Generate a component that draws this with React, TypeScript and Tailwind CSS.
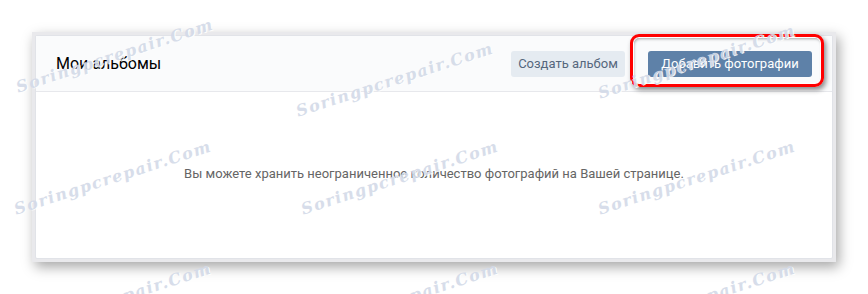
const marks = [
  { x: 115, y: 56 },
  { x: 395, y: 80 },
  { x: 697, y: 62 },
  { x: 113, y: 178 },
  { x: 400, y: 178 },
  { x: 697, y: 178 },
  { x: 113, y: 300 },
  { x: 400, y: 300 },
  { x: 697, y: 300 },
];

function Watermark({ x, y }: { x: number; y: number }) {
  return (
    <div
      className="pointer-events-none absolute -translate-x-1/2 -translate-y-1/2 -rotate-[18deg] whitespace-nowrap text-[16px] font-bold italic tracking-[1.5px] text-[#d3dae8] opacity-90 [font-family:'DejaVu_Serif',serif] [text-shadow:1px_1px_0_#fff]"
      style={{ left: x, top: y }}
    >
      Soringpcrepair.Com
    </div>
  );
}

export default function App() {
  return (
    <div className="relative h-[294px] w-[868px] overflow-hidden bg-white pt-8 pl-8 [font-family:Roboto,'Open_Sans',sans-serif]">
      <div className="h-[230px] w-[804px] bg-[#e9e9ec] p-[3px] shadow-[3px_5px_12px_rgba(0,0,0,0.35)]">
        <div className="flex h-full flex-col rounded-[2px] border border-[#e1e3e8] bg-white">
          <div className="flex h-[56px] items-center justify-between border-b border-[#e7e8ec] bg-[#fafbfc] pl-[20px] pr-[20px]">
            <div className="text-[16px] text-black">Мои альбомы</div>
            <div className="flex items-center gap-[23px]">
              <div className="flex h-[26px] w-[114px] items-center justify-center rounded-[3px] bg-[#e5ebf1] text-[13px] text-[#55677d]">
                Создать альбом
              </div>
              <div className="flex h-[26px] w-[164px] items-center justify-center rounded-[3px] bg-[#5e81a8] text-[13px] text-white">
                Добавить фотографии
              </div>
            </div>
          </div>
          <div className="flex flex-1 items-center justify-center pb-[2px] text-[13px] text-[#656565]">
            Вы можете хранить неограниченное количество фотографий на Вашей странице.
          </div>
        </div>
      </div>
      <div className="pointer-events-none absolute top-[34px] left-[630px] h-[53px] w-[194px] rounded-[9px] border-[3px] border-[#ff0000] shadow-[2px_3px_5px_rgba(0,0,0,0.45),inset_0_0_0_1px_#fff,inset_1px_2px_3px_rgba(0,0,0,0.35)]" />
      {marks.map((m, i) => (
        <Watermark key={i} x={m.x} y={m.y} />
      ))}
    </div>
  );
}
